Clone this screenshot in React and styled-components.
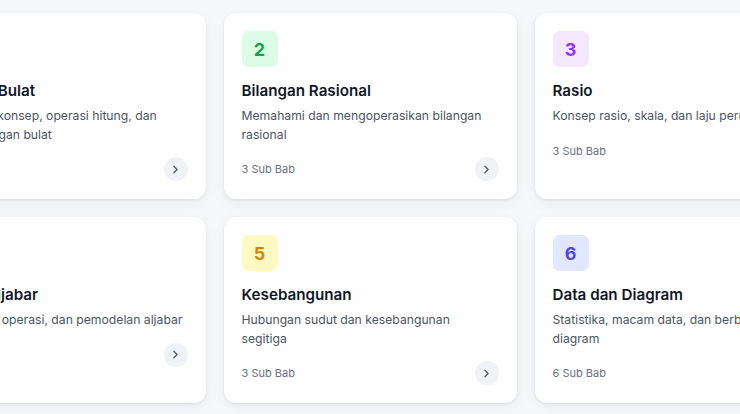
import React from "react";
import styled, { createGlobalStyle } from "styled-components";
import { ChevronRight } from "lucide-react";

const GlobalStyle = createGlobalStyle`
  html, body {
    margin: 0;
    padding: 0;
    background: #f6f7f9;
    font-family: Inter, "Noto Sans", sans-serif;
    overflow: hidden;
  }
`;

const Page = styled.div`
  display: flex;
  justify-content: center;
  width: 100vw;
  height: 100vh;
  overflow: hidden;
  padding-top: 13px;
  box-sizing: border-box;
`;

const Grid = styled.div`
  flex: 0 0 auto;
  display: grid;
  grid-template-columns: repeat(3, 293px);
  gap: 18px;
  align-content: start;
`;

const Card = styled.div`
  background: #fefefe;
  border-radius: 12px;
  padding: 18px;
  box-shadow: 0 1px 3px rgba(15, 23, 42, 0.08), 0 4px 14px rgba(15, 23, 42, 0.05);
  display: flex;
  flex-direction: column;
`;

const Badge = styled.div`
  width: 36px;
  height: 36px;
  border-radius: 7px;
  display: flex;
  align-items: center;
  justify-content: center;
  background: ${(p) => p.$bg};
  color: ${(p) => p.$fg};
  font-size: 18px;
  font-weight: 700;
  margin-bottom: 12px;
`;

const Title = styled.h3`
  margin: 0 0 4px;
  font-size: 15.2px;
  line-height: 24px;
  font-weight: 600;
  color: #111827;
`;

const Desc = styled.p`
  margin: 0 0 13px;
  padding-right: 2px;
  font-size: 12.2px;
  line-height: 18.5px;
  color: #4b5563;
`;

const Footer = styled.div`
  display: flex;
  align-items: center;
  justify-content: space-between;
  height: 24px;
`;

const Count = styled.span`
  font-size: 11px;
  color: #6b7280;
`;

const Arrow = styled.button`
  width: 24px;
  height: 24px;
  border-radius: 50%;
  border: none;
  padding: 0;
  background: #f1f2f5;
  color: #4b5563;
  display: flex;
  align-items: center;
  justify-content: center;
  cursor: pointer;
`;

const chapters = [
  {
    no: 1,
    bg: "#dbeafe",
    fg: "#2563eb",
    title: "Bilangan Bulat",
    desc: "Memahami konsep, operasi hitung, dan urutan bilangan bulat",
    subs: 4,
  },
  {
    no: 2,
    bg: "#dcfce7",
    fg: "#16a34a",
    title: "Bilangan Rasional",
    desc: "Memahami dan mengoperasikan bilangan rasional",
    subs: 3,
  },
  {
    no: 3,
    bg: "#f3e8ff",
    fg: "#9333ea",
    title: "Rasio",
    desc: "Konsep rasio, skala, dan laju perubahan",
    subs: 3,
  },
  {
    no: 4,
    bg: "#fee2e2",
    fg: "#dc2626",
    title: "Bentuk Aljabar",
    desc: "Persamaan, operasi, dan pemodelan aljabar",
    subs: 4,
  },
  {
    no: 5,
    bg: "#fef9c3",
    fg: "#ca8a04",
    title: "Kesebangunan",
    desc: "Hubungan sudut dan kesebangunan segitiga",
    subs: 3,
  },
  {
    no: 6,
    bg: "#e0e7ff",
    fg: "#4f46e5",
    title: "Data dan Diagram",
    desc: "Statistika, macam data, dan berbagai jenis diagram",
    subs: 6,
  },
];

const App = () => {
  return (
    <>
      <GlobalStyle />
      <Page>
        <Grid>
          {chapters.map((c) => (
            <Card key={c.no}>
              <Badge $bg={c.bg} $fg={c.fg}>
                {c.no}
              </Badge>
              <Title>{c.title}</Title>
              <Desc>{c.desc}</Desc>
              <Footer>
                <Count>{c.subs} Sub Bab</Count>
                <Arrow aria-label="Buka bab">
                  <ChevronRight size={13} strokeWidth={2.2} />
                </Arrow>
              </Footer>
            </Card>
          ))}
        </Grid>
      </Page>
    </>
  );
};

export default App;
